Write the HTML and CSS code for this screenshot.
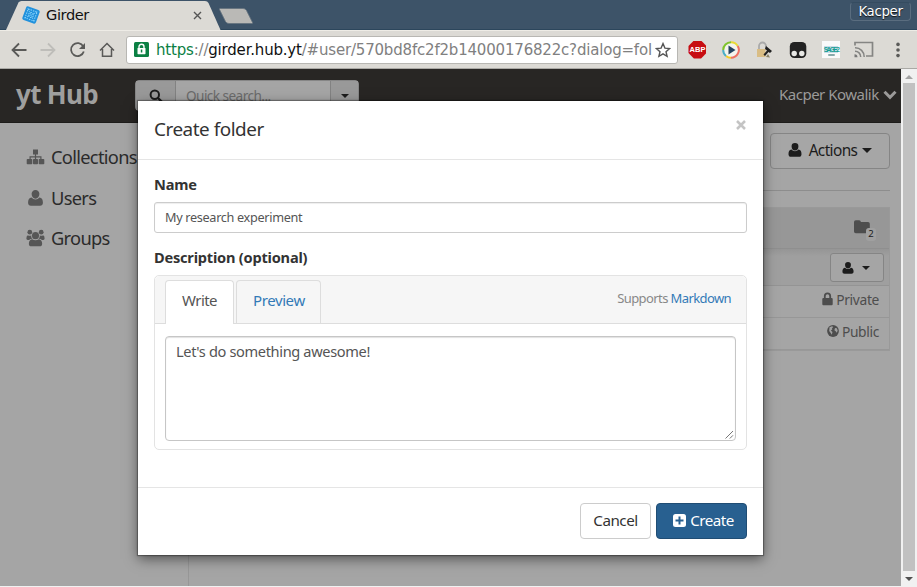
FILE: index.html
```
<!DOCTYPE html>
<html lang="en">
<head>
<meta charset="utf-8">
<title>Girder</title>
<link rel="stylesheet" href="styles.css">
</head>
<body>
<svg class="defs" width="0" height="0">
  <symbol id="user" viewBox="0 0 14 14"><path d="M7 0a3.4 3.4 0 0 1 3.4 3.6C10.400 6 9 7.600 7 7.600S3.600 6 3.600 3.600A3.400 3.400 0 0 1 7 0zM3.600 6.600C4.500 7.700 5.600 8.300 7 8.300s2.500-.6 3.400-1.700c2.200.2 3.100 1.900 3.100 4.600 0 1.700-1 2.600-2.500 2.600H3c-1.500 0-2.500-.9-2.500-2.600 0-2.700.9-4.400 3.100-4.600z"/></symbol>
</svg>
<div class="tabstrip">
  <svg class="tab-shape" width="260" height="30" viewBox="0 0 260 30">
    <path d="M6 30L18.500 2.500Q19.500 1 21.500 1H205Q207.500 1 208.500 3L220.500 30Z" fill="#dcdad5"/>
    <path d="M219.500 9.500Q219 8.500 220.500 8.500H243Q245.500 8.500 246.500 10.500L252.500 22.500Q253 23.500 251.500 23.500H229Q226.500 23.500 225.500 21.500Z" fill="#bab9b6" stroke="#64727d" stroke-width=".8"/>
  </svg>
  <div class="tab">
    <svg width="18" height="18" viewBox="0 0 18 18"><g transform="rotate(20 9 9)"><rect x="1.800" y="1.800" width="14.400" height="14.400" rx="2" fill="#2191dc"/><g fill="none" stroke="#8ad4fb" stroke-dasharray="1.500 1"><rect x="4.300" y="4.300" width="9.400" height="9.400"/><circle cx="9" cy="9" r="2.500"/><path d="M4 4L14 14M14 4L4 14" stroke-width=".7"/></g></g></svg>
    <span class="tab-title">Girder</span>
    <svg class="tab-close" width="9" height="9" viewBox="0 0 9 9"><path d="M1 1L8 8M8 1L1 8" stroke="#555" stroke-width="1.400"/></svg>
  </div>
  <div class="profile">Kacper</div>
</div>
<div class="toolbar">
  <div class="nav">
    <svg width="18" height="18" viewBox="0 0 18 18" class="line"><path d="M16.500 9H2.500M9 2.500L2.500 9L9 15.500"/></svg>
    <svg width="18" height="18" viewBox="0 0 18 18" class="line off"><path d="M1.500 9H15.500M9 2.500L15.500 9L9 15.500"/></svg>
    <svg width="18" height="18" viewBox="0 0 18 18" class="line"><path d="M14.300 5.500A6.500 6.500 0 1 0 14.800 10.500"/><path d="M16 2V8H10Z" fill="#5a5a58" stroke="none"/></svg>
    <svg width="18" height="18" viewBox="0 0 18 18" class="line"><path d="M2 9.500L9 2.500L16 9.500M4.500 8V15.200H13.500V8" stroke-width="1.500"/></svg>
  </div>
  <div class="omnibox">
    <svg width="15" height="15" viewBox="0 0 15 15"><rect width="15" height="15" rx="1.500" fill="#0b8043"/><path d="M5 6V4.800a2.500 2.500 0 0 1 5 0V6" fill="none" stroke="#fff" stroke-width="1.400"/><rect x="3.500" y="6" width="8" height="6.200" rx=".6" fill="#fff"/><rect x="6.800" y="7.500" width="1.500" height="3" fill="#0b8043"/></svg>
    <div class="url"><span class="scheme">https</span>://<span class="host">girder.hub.yt</span>/#user/570bd8fc2f2b14000176822c?dialog=fol</div>
    <svg class="star" width="16" height="16" viewBox="0 0 16 16"><path d="M8 1.600L9.900 6.100L14.700 6.500L11 9.700L12.100 14.400L8 11.900L3.900 14.400L5 9.700L1.300 6.500L6.100 6.100Z" fill="none" stroke="#555" stroke-width="1.400"/></svg>
  </div>
  <div class="exts">
    <span class="ext"><span class="abp">ABP</span></span>
    <span class="ext"><svg width="18" height="18" viewBox="0 0 18 18"><circle cx="9" cy="9" r="8" fill="#f4f4ee"/><g fill="none" stroke-width="2"><path d="M9 1.200A7.800 7.800 0 0 0 1.200 9" stroke="#7fc32c"/><path d="M9 1.200A7.800 7.800 0 0 1 15.700 5" stroke="#eadb37"/><path d="M15.700 5A7.800 7.800 0 0 1 9 16.800" stroke="#ef7061"/><path d="M9 16.800A7.800 7.800 0 0 1 4 15" stroke="#f3cb25"/><path d="M4 15A7.800 7.800 0 0 1 1.200 9" stroke="#4aaec6"/></g><path d="M6.500 4.500L13.500 9L6.500 13.500Z" fill="#24425f"/></svg></span>
    <span class="ext"><svg width="18" height="18" viewBox="0 0 18 18"><path d="M4 8V5a3.500 3.500 0 0 1 7 0V8" fill="none" stroke="#aaa" stroke-width="1.800"/><rect x="2" y="8" width="8.500" height="8" fill="#d9bd85"/><path d="M11 5L17 10L15 12L13.500 11L10 15L8.500 13.500L12 9.500L10 8Z" fill="#222"/><path d="M11 16L13 13L15 16.500Z" fill="#888065"/></svg></span>
    <span class="ext"><svg width="18" height="18" viewBox="0 0 18 18"><rect x=".8" y="1" width="16.500" height="16" rx="4.500" fill="#222"/><circle cx="5.200" cy="12.500" r="2.700" fill="#e8e8e5"/><circle cx="12.800" cy="12.500" r="2.700" fill="#e8e8e5"/></svg></span>
    <span class="ext"><span class="sage"><b>SAGE2</b><i></i></span></span>
    <span class="ext"><svg width="20" height="17" viewBox="0 0 20 17"><path d="M1 4.500V1.500H18.500V15H12" fill="none" stroke="#858583" stroke-width="1.700"/><path d="M1 6.700A9 9 0 0 1 10.200 16M1 10.200A5.600 5.600 0 0 1 6.700 16" fill="none" stroke="#858583" stroke-width="1.500"/><path d="M.5 13.200A3 3 0 0 1 3.500 16.200H.5Z" fill="#777"/></svg></span>
    <span class="ext"><svg width="4" height="16" viewBox="0 0 4 16" fill="#5a5a58"><circle cx="2" cy="2.400" r="1.800"/><circle cx="2" cy="8" r="1.800"/><circle cx="2" cy="13.600" r="1.800"/></svg></span>
  </div>
</div>
<div class="view">
  <div class="page">
    <header class="header">
      <div class="brand">yt Hub</div>
      <div class="search">
        <span class="search-btn"><svg width="14" height="14" viewBox="0 0 14 14"><circle cx="5.800" cy="5.800" r="4.200" fill="none" stroke="#1c1c1c" stroke-width="2"/><path d="M9 9L12.600 12.600" stroke="#1c1c1c" stroke-width="2.400" stroke-linecap="round"/></svg></span>
        <span class="search-input">Quick search...</span>
        <span class="search-drop"><i class="caret"></i></span>
      </div>
      <div class="me"><span>Kacper Kowalik</span><svg width="14" height="10" viewBox="0 0 14 10"><path d="M1.500 1.800L7 7.300L12.500 1.800" fill="none" stroke="#9b9a99" stroke-width="3"/></svg></div>
    </header>
    <div class="main">
      <nav class="side">
        <a><svg width="18" height="16" viewBox="0 0 18 16"><path d="M6.500 .5h5v5H9.600V7.300H15V10h2q.8 0 .8.800V14.500q0 .8-.8.800H13q-.8 0-.8-.8V10.800q0-.8.8-.8h.8V8.500H9.600V10H10.700q.8 0 .8.800V14.500q0 .8-.8.800H7.300q-.8 0-.8-.8V10.800q0-.8.800-.8H8.400V8.500H4.200V10H5q.8 0 .8.800V14.500q0 .8-.8.800H1q-.8 0-.8-.8V10.800Q.2 10 1 10H3V7.300H8.400V5.500H6.500z"/></svg><span>Collections</span></a>
        <a><svg width="18" height="16" viewBox="0 0 14 14"><use href="#user"/></svg><span>Users</span></a>
        <a><svg width="20" height="18" viewBox="0 0 20 18"><circle cx="4" cy="2.900" r="2.500"/><circle cx="16" cy="2.900" r="2.500"/><path d="M2 6Q4 7.200 5.500 6C5.300 8 6 9 6.800 9.700Q4 9.800 3.300 11H1.800Q.4 11 .4 9.500Q.4 6.200 2 6zM18 6Q16 7.200 14.500 6C14.700 8 14 9 13.200 9.700Q16 9.800 16.700 11H18.200Q19.600 11 19.600 9.500Q19.600 6.200 18 6z"/><circle cx="10" cy="6.500" r="3.700"/><path d="M6.400 10.200Q10 12.600 13.600 10.200Q17 10.700 17 15Q17 17.800 14.300 17.800H5.700Q3 17.800 3 15Q3 10.700 6.400 10.200z"/></svg><span>Groups</span></a>
      </nav>
      <section class="content">
        <div class="actions-row"><span class="btn-actions"><svg width="14" height="14" viewBox="0 0 14 14"><use href="#user"/></svg><span>Actions</span><i class="caret"></i></span></div>
        <div class="panel">
          <div class="panel-head"><span class="folder"><svg width="16" height="14" viewBox="0 0 16 14"><path d="M0 2Q0 .2 1.800 .2H5.200Q6.700 .2 6.900 2H14Q15.800 2 15.800 3.800V11.500Q15.800 13.200 14 13.200H1.800Q0 13.200 0 11.500z"/></svg><b class="badge">2</b></span></div>
          <div class="panel-tools"><span class="btn-small"><svg width="12" height="12" viewBox="0 0 14 14"><use href="#user"/></svg><i class="caret"></i></span></div>
          <div class="row"><svg width="11" height="14" viewBox="0 0 11 14"><path d="M2.800 6.500V4a2.700 2.700 0 0 1 5.400 0V6.500" fill="none" stroke="#4d4d4d" stroke-width="1.800"/><rect x=".3" y="6" width="10.400" height="7.300" rx="1"/></svg><span>Private</span></div>
          <div class="row"><svg width="12" height="12" viewBox="0 0 12 12"><circle cx="6" cy="6" r="5.900"/><path d="M2.500 2.300L5 1.200L6.300 2L5 3.300L5.300 4.500L3.800 5.500L5.500 7L4.800 9.800L3.700 8L2.200 6zM8 3L9.800 3.200L10.700 5.500L9.800 7.800L8.700 6.200L7.400 5.200z" fill="#a1a1a1"/></svg><span>Public</span></div>
        </div>
      </section>
    </div>
  </div>
  <div class="scrollbar"><i class="up"></i><i class="thumb"></i><i class="down"></i></div>
</div>
<div class="modal">
  <div class="modal-head"><span class="title">Create folder</span><svg width="10" height="10" viewBox="0 0 10 10"><path d="M1 1L9 9M9 1L1 9" stroke="#c4c4c4" stroke-width="2.500"/></svg></div>
  <div class="modal-body">
    <div class="label">Name</div>
    <div class="input">My research experiment</div>
    <div class="label">Description (optional)</div>
    <div class="editor">
      <div class="tabs">
        <span class="etab active">Write</span>
        <span class="etab">Preview</span>
        <span class="supports">Supports <a>Markdown</a></span>
      </div>
      <div class="area">Let's do something awesome!<svg class="grip" width="9" height="9" viewBox="0 0 9 9"><path d="M.5 8.500L8 1M4.800 8.500L8 5.300" stroke="#777"/></svg></div>
    </div>
  </div>
  <div class="modal-foot">
    <span class="btn cancel">Cancel</span>
    <span class="btn create"><svg width="13" height="13" viewBox="0 0 13 13"><rect width="13" height="13" rx="2.500" fill="#fff"/><path d="M6.500 2.500V10.500M2.500 6.500H10.500" stroke="#286090" stroke-width="2"/></svg><span>Create</span></span>
  </div>
</div>
</body>
</html>
```
FILE: styles.css
```
* { box-sizing: border-box; }
body { margin: 0; width: 917px; height: 587px; overflow: hidden; position: relative; background: #f1f1f1; font-family: "Noto Sans", "Open Sans", sans-serif; color: #333; white-space: nowrap; }
svg { display: block; flex: none; }
.defs { position: absolute; }
.tabstrip { height: 30px; background: #3d5368; position: relative; display: flex; justify-content: space-between; border-bottom: 1px solid #2c465c; }
.tab-shape { position: absolute; left: 0; top: 0; }
.tab { position: relative; display: flex; align-items: center; width: 202px; height: 30px; padding-left: 22px; font: 14.6px/30px "DejaVu Sans", sans-serif; color: #111; }
.tab-title { margin-left: 6px; height: 30px; letter-spacing: -.4px; }
.tab-close { margin-left: auto; }
.profile { height: 19px; width: 61px; margin: 2px 6px 0 0; border: 1px solid #5a6d7f; border-top-color: #354c60; border-radius: 4px; color: #fff; font: 13.300px/17px "DejaVu Sans", sans-serif; text-align: center; letter-spacing: -.3px; text-shadow: 0 1px 1px #111; }
.toolbar { height: 39px; background: #dcdad5; border-top: 1px solid #eeece6; border-bottom: 1px solid #aaa9a5; display: flex; align-items: center; padding-left: 5px; }
.nav { width: 121px; display: flex; gap: 11.300px; padding-left: 5px; }
.line { fill: none; stroke: #5a5a58; stroke-width: 1.800; }
.off { stroke: #bebdb9; }
.omnibox { width: 552px; height: 28px; background: #fff; border: 1px solid #b8b7b3; border-radius: 3px; display: flex; align-items: center; padding-left: 7px; }
.url { width: 498px; margin-left: 7px; font: 15px/24px "DejaVu Sans", sans-serif; letter-spacing: -.19px; color: #808080; }
.scheme { color: #0b8043; }
.host { color: #111; }
.star { margin-left: 1px; }
.exts { display: flex; padding-left: 2.800px; }
.ext { width: 33.400px; height: 18px; display: flex; align-items: center; justify-content: center; }
.abp { width: 18px; height: 18px; background: #c70d12; color: #fff; font: bold 7.500px/18px "Liberation Sans", sans-serif; text-align: center; clip-path: polygon(30% 0, 70% 0, 100% 30%, 100% 70%, 70% 100%, 30% 100%, 0 70%, 0 30%); }
.sage { width: 18px; height: 17px; background: #fafafa; display: flex; flex-direction: column; align-items: center; }
.sage b { font: bold 6.500px/7px "Liberation Sans", sans-serif; letter-spacing: -1.500px; color: #159d92; background: #c9dde8; margin-top: 5px; }
.sage i { width: 7px; height: 2px; background: #8aa; border-radius: 2px; margin-top: 1px; }
.view { display: flex; height: 517px; }
.page { width: 901px; background: #a5a5a5; display: flex; flex-direction: column; }
.header { height: 54px; background: #282624; border-bottom: 1px solid #1e1d1b; display: flex; padding-left: 16px; }
.brand { width: 119px; font-weight: bold; font-size: 26px; letter-spacing: -.7px; line-height: 50px; color: #9f9f9e; }
.search { display: flex; width: 224px; height: 31px; margin-top: 11px; border: 1px solid #868686; border-radius: 4px; background: #a5a5a5; }
.search-btn { width: 40px; background: #999; border-right: 1px solid #828282; display: flex; align-items: center; justify-content: center; }
.search-input { flex: 1; padding-left: 10px; font-size: 13.600px; letter-spacing: -.63px; line-height: 29px; color: #6b6b6b; letter-spacing: -.55px; }
.search-drop { width: 28px; background: #999; border-left: 1px solid #828282; display: flex; align-items: center; justify-content: center; }
.caret { border: 4px solid transparent; border-top-color: #1c1c1c; border-bottom: 0; }
.me { margin-left: auto; width: 122px; display: flex; align-items: center; justify-content: space-between; padding: 0 4px 2px 0; font-size: 15px; letter-spacing: -.5px; color: #9b9a99; }
.me span { padding-bottom: 1px; }
.main { flex: 1; display: flex; }
.side { width: 189px; border-right: 1px solid #979797; padding: 14px 0 0 26px; background: #a5a5a5; font-size: 18.300px; letter-spacing: -.7px; fill: #565656; color: #2b2b2b; }
.side a { display: flex; align-items: center; height: 40.600px; }
.side svg { width: 19px; }
.side span { margin: 0 0 1px 6px; }
.content { flex: 1; padding: 10px 11px 0 0; }
.actions-row { height: 58px; border-bottom: 1px solid #8d8d8d; display: flex; justify-content: flex-end; }
.btn-actions { width: 120px; height: 36px; border: 1px solid #858585; border-radius: 4px; display: flex; align-items: center; justify-content: center; gap: 7px; padding-bottom: 2px; font-size: 15.400px; letter-spacing: -.6px; color: #1c1c1c; fill: #1c1c1c; background: #a6a6a6; }
.btn-actions .caret { border-width: 5px 5px 0; margin-left: -2px; }
.panel { margin-top: 16px; border: 1px solid #999; height: 144px; color: #4d4d4d; fill: #4d4d4d; }
.panel-head { height: 41px; background: #979797; border-bottom: 1px solid #8f8f8f; padding: 12px 19px 0 0; display: flex; justify-content: flex-end; }
.folder { position: relative; width: 16px; }
.badge { position: absolute; left: 12px; top: 8px; width: 10px; height: 13px; background: #a0a0a0; border-radius: 3px; font: 9.500px/12px "Noto Sans", sans-serif; text-align: center; color: #1c1c1c; }
.panel-tools { height: 37px; background: linear-gradient(#959595, #9f9f9f 7px); border-bottom: 1px solid #949494; padding: 4px 5px 0 0; display: flex; justify-content: flex-end; }
.btn-small { width: 54px; height: 29px; border: 1px solid #858585; border-radius: 3px; background: #a5a5a5; display: flex; align-items: center; justify-content: center; gap: 8px; padding-right: 2px; fill: #1c1c1c; }
.row { height: 32px; border-bottom: 1px solid #979797; display: flex; justify-content: flex-end; align-items: center; padding: 0 10px 5px 0; font-size: 13.800px; letter-spacing: -.33px; gap: 3px; }
.scrollbar { width: 16px; background: #f1f1f1; display: flex; flex-direction: column; align-items: center; }
.scrollbar i { flex: none; }
.up { margin-top: 6px; border: 4px solid transparent; border-bottom-color: #a3a3a3; border-top: 0; }
.thumb { width: 12px; height: 488px; margin-top: 4px; background: #c1c1c1; }
.down { margin-top: 6px; border: 4px solid transparent; border-top-color: #505050; border-bottom: 0; }
.modal { position: absolute; left: 138px; top: 101px; width: 625px; height: 454px; background: #fff; box-shadow: 0 4px 12px rgba(0,0,0,.5), 0 0 1px 1px rgba(0,0,0,.3); }
.modal-head { height: 59px; border-bottom: 1px solid #e5e5e5; display: flex; justify-content: space-between; padding: 0 17px 0 16px; }
.modal-head svg { margin-top: 19px; }
.title { font-size: 18.900px; letter-spacing: -.47px; line-height: 56px; }
.modal-body { padding: 0 16px; height: 327px; }
.label { height: 42px; font-size: 14.600px; letter-spacing: -.22px; line-height: 48px; font-weight: bold; }
.input { height: 31px; border: 1px solid #ccc; border-radius: 3px; padding-left: 10px; font-size: 12.700px; letter-spacing: -.33px; line-height: 28px; color: #555; box-shadow: inset 0 1px 1px rgba(0,0,0,.07); }
.editor { height: 175px; border: 1px solid #e3e3e3; border-radius: 5px; }
.tabs { height: 48px; background: #f6f6f6; border-bottom: 1px solid #ddd; border-radius: 5px 5px 0 0; padding: 4px 15px 0 10px; display: flex; gap: 2px; }
.etab { height: 43px; width: 85px; border: 1px solid #ddd; border-bottom: 0; border-radius: 4px 4px 0 0; padding-left: 16px; font-size: 15px; letter-spacing: -.4px; line-height: 38px; color: #337ab7; }
.etab.active { width: 69px; height: 44px; background: #fff; color: #555; letter-spacing: -.55px; }
.supports { margin-left: auto; font-size: 13px; letter-spacing: -.6px; line-height: 37px; color: #888; }
.supports a { color: #337ab7; }
.area { position: relative; height: 105px; margin: 12px 10px 0 10px; border: 1px solid #c6c6c6; border-radius: 4px; padding-left: 10px; font-size: 14.600px; letter-spacing: -.36px; line-height: 28px; color: #555; box-shadow: inset 0 1px 1px rgba(0,0,0,.12); }
.grip { position: absolute; right: 1px; bottom: 1px; }
.modal-foot { height: 68px; border-top: 1px solid #e5e5e5; display: flex; justify-content: flex-end; gap: 5px; padding: 15px 16px 0 0; }
.btn { height: 36px; border: 1px solid #ccc; border-radius: 4px; font-size: 15.200px; letter-spacing: -.5px; display: flex; align-items: center; justify-content: center; gap: 4px; padding-bottom: 2px; }
.cancel { width: 71px; }
.create { width: 91px; background: #286090; border-color: #204d74; color: #fff; padding-left: 4px; }
```
